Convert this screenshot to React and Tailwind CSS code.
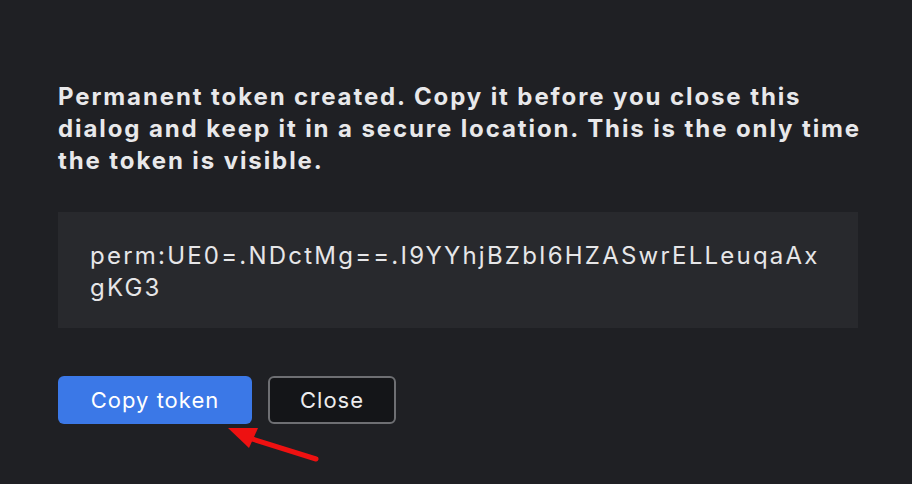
export default function App() {
  return (
    <div className="relative h-[484px] w-[912px] overflow-hidden bg-[#1f2024] font-['Inter',sans-serif]">
      <div className="flex w-[800px] flex-col pl-[58px] pt-[81px] box-content">
        {/* message */}
        <p className="w-[820px] text-[24px] font-bold leading-[32px] tracking-[1.9px] text-[#e8e8ea]">
          Permanent token created. Copy it before you close this dialog and keep it in a secure location. This is the only time the token is visible.
        </p>

        {/* token box */}
        <div className="mt-[35px] bg-[#28292d] px-8 pb-6 pt-7 text-[24px] leading-[32px] tracking-[2.22px] text-[#e6e6e8] break-all">
          perm:UE0=.NDctMg==.I9YYhjBZbI6HZASwrELLeuqaAxgKG3
        </div>

        {/* buttons */}
        <div className="mt-12 flex gap-4">
          <button className="h-12 w-[194px] rounded-md bg-[#3b78e7] text-[22px] tracking-[1px] text-white">
            Copy token
          </button>
          <button className="h-12 w-32 rounded-md border-2 border-[#6e6f73] bg-[#141518] text-[22px] tracking-[1px] text-[#ececee]">
            Close
          </button>
        </div>
      </div>

      {/* red annotation arrow */}
      <svg className="absolute left-[222px] top-[422px]" width="104" height="46" viewBox="0 0 104 46">
        <line x1="94" y1="37" x2="24" y2="15" stroke="#ee1111" strokeWidth="5" strokeLinecap="round" />
        <polygon points="6,6 36,6 27,26" fill="#ee1111" />
      </svg>
    </div>
  );
}
